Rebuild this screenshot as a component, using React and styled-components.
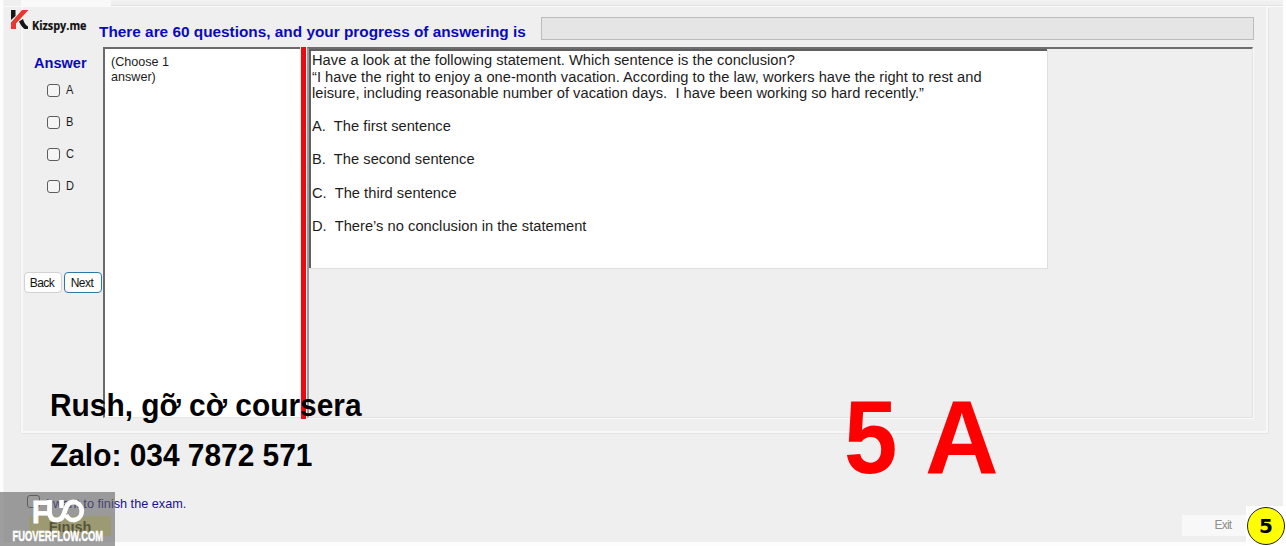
import React from "react";
import styled, { createGlobalStyle } from "styled-components";

const Global = createGlobalStyle`
  html, body { margin: 0; padding: 0; background: #fff; overflow: hidden; }
  * { box-sizing: border-box; }
  body { font-family: "Liberation Sans", Arial, sans-serif; color: #1c1c1c; }
`;

const Window = styled.div`
  position: relative;
  width: 1286px;
  height: 546px;
  padding: 0 3px 4px;
  background: #fdfdfd;
  overflow: hidden;
`;

const Surface = styled.div`
  display: flex;
  flex-direction: column;
  width: 1280px;
  height: 542px;
  background: #efefef;
  border-left: 1px solid #f5f5f5;
`;

const TabStrip = styled.div`
  display: flex;
  height: 7px;
  padding-left: 17px;
  border-bottom: 1px solid #fafafa;
`;

const Tab = styled.div`
  width: 90px;
  height: 6px;
  background: #f9f9f9;
`;

const StripRule = styled.div`
  flex: 1;
  height: 6px;
  border-bottom: 1px solid #e2e2e2;
  border-top: 1px solid #f4f4f4;
`;

const Group = styled.section`
  width: 1247px;
  height: 426px;
  margin-left: 17px;
  border: solid #f8f8f8;
  border-width: 0 2px 2px;
  box-shadow: -1px 0 #e9e9e9, 1px 1px #e5e5e5;
`;

const Header = styled.header`
  display: flex;
  height: 40px;
  padding-top: 10px;
`;

const Title = styled.h1`
  width: 442px;
  margin: 7px 0 0 76px;
  font-size: 14px;
  line-height: 17px;
  font-weight: bold;
  color: #0a0abc;
  white-space: nowrap;
  transform: scaleX(1.097);
  transform-origin: 0 0;
`;

const Progress = styled.div`
  width: 713px;
  height: 23px;
  background: #e5e5e5;
  border: 1px solid #bcbcbc;
`;

const Body = styled.div`
  display: flex;
  height: 372px;
`;

const Sidebar = styled.aside`
  width: 80px;
  display: flex;
  flex-direction: column;
`;

const SideTitle = styled.h2`
  margin: 8px 0 0 11px;
  font-size: 14px;
  line-height: 16px;
  color: #0a0abc;
  transform: scaleX(1.04);
  transform-origin: 0 0;
`;

const Options = styled.div`
  display: flex;
  flex-direction: column;
  gap: 19px;
  padding: 13px 0 0 24px;
`;

const Option = styled.label`
  display: flex;
  gap: 6px;
  height: 13px;
  font-size: 12px;
  line-height: 12px;
`;

const OptionLetter = styled.span`
  transform: scaleX(0.92);
  transform-origin: 0 0;
`;

const Box = styled.span`
  width: 13px;
  height: 13px;
  flex: none;
  border: 1px solid #5c5c5c;
  border-radius: 3px;
  background: #f5f5f5;
`;

const Nav = styled.div`
  display: flex;
  gap: 2px;
  margin: 79px 0 0 1px;
`;

const Button = styled.button`
  width: 38px;
  height: 21px;
  flex: none;
  padding: 0 2px 0 0;
  font: 12px/20px "Liberation Sans", Arial, sans-serif;
  letter-spacing: -0.5px;
  color: #111;
  background: #fdfdfd;
  border: 1px solid ${(p) => (p.$focus ? "#2a7aa8" : "#d2d2d2")};
  border-radius: 4px;
`;

const NotePane = styled.div`
  width: 197px;
  height: 371px;
  padding: 6px 6px;
  font-size: 12.6px;
  line-height: 15px;
  background: #fff;
  border: solid #6a6a6a;
  border-width: 2px 0 0 2px;
  border-bottom: 1px solid #e6e6e6;
  white-space: pre-line;
`;

const Splitter = styled.div`
  width: 5px;
  height: 372px;
  margin: 0 1px;
  background: #ea0a12;
`;

const Content = styled.div`
  width: 946px;
  height: 371px;
  border: 1px solid #e2e2e2;
  border-top: 2px solid #6e6e6e;
  border-left: 2px solid #9a9a9a;
  box-shadow: 1px 1px #fafafa;
`;

const Question = styled.div`
  width: 738px;
  height: 219px;
  padding: 1px 0 0 1px;
  font-size: 14.667px;
  line-height: 16.57px;
  letter-spacing: 0.03px;
  white-space: pre;
  background: #fff;
  border: solid #5f5f5f;
  border-width: 2px 0 0 2px;
  box-shadow: 1px 1px #dedede;
`;

const Footer = styled.footer`
  display: flex;
  justify-content: space-between;
  padding-top: 62px;
`;

const FinishArea = styled.div`
  padding-left: 23px;
`;

const FinishCheck = styled.label`
  display: flex;
  gap: 6px;
  font-size: 12.7px;
  line-height: 19px;
  height: 18px;
  color: #1a1290;
  white-space: nowrap;
`;

const FinishButton = styled.button`
  display: block;
  width: 82px;
  height: 20px;
  margin: 3px 0 0 2px;
  padding: 0;
  border: 0;
  background: #f4f08e;
  color: #4a4400;
  font: bold 14.5px/22px "Liberation Sans", Arial, sans-serif;
`;

const ExitButton = styled.button`
  width: 82px;
  height: 21px;
  margin: 20px 19px 0 0;
  padding: 0;
  border: 0;
  background: #f8f8f8;
  color: #8f8f8f;
  font: 12px/21px "Liberation Sans", Arial, sans-serif;
  letter-spacing: -0.8px;
`;

const BrandMark = styled.div`
  position: absolute;
  left: 9px;
  top: 8px;
`;

const Caption = styled.p`
  position: absolute;
  left: 50px;
  top: 381px;
  margin: 0;
  font-size: 30px;
  line-height: 48px;
  font-weight: bold;
  color: #000;
  white-space: pre;
  transform: scale(0.996, 1.04);
  transform-origin: 0 0;
`;

const Stamp = styled.div`
  position: absolute;
  left: 844px;
  top: 377px;
  display: flex;
  gap: 25px;
  font-size: 100px;
  line-height: 115px;
  font-weight: bold;
  color: #f00;
`;

const StampGlyph = styled.span`
  transform: scale(${(p) => p.$stretch}, 1.04);
  transform-origin: 0 0;
`;

const Watermark = styled.div`
  position: absolute;
  left: 0;
  top: 492px;
  width: 115px;
  height: 54px;
  background: rgba(96, 96, 96, 0.6);
`;

const BadgeTile = styled.div`
  position: absolute;
  left: 1246px;
  top: 506px;
  width: 40px;
  height: 40px;
  padding: 1px;
  background: #fff;
`;

const Badge = styled.div`
  width: 38px;
  height: 38px;
  border: 1px solid #222;
  border-radius: 50%;
  background: #ff0;
  color: #000;
  text-align: center;
  font: bold 20px/37px "DejaVu Sans", Verdana, sans-serif;
`;

const QUESTION = `Have a look at the following statement. Which sentence is the conclusion?
“I have the right to enjoy a one-month vacation. According to the law, workers have the right to rest and
leisure, including reasonable number of vacation days.  I have been working so hard recently.”

A.  The first sentence

B.  The second sentence

C.  The third sentence

D.  There’s no conclusion in the statement`;

function KizspyLogo() {
  return (
    <svg width="80" height="26" viewBox="0 0 80 26">
      <path d="M2 2h4.500v6l-4.500 4z" fill="#151515" />
      <path d="M13 2h6.500L7 15.500v5.500H2v-6.500z" fill="#e23a30" />
      <path d="M10 13.500l4-2.500q1.500 5.500 5 7.500v2.500h-3.500q-3-2-5.500-7.500z" fill="#151515" />
      <text x="23" y="22" fontFamily="Open Sans, Noto Sans, sans-serif" fontWeight="700" fontSize="11.500" fill="#111" stroke="#111" strokeWidth="0.2" textLength="54.500" lengthAdjust="spacingAndGlyphs">Kizspy.me</text>
    </svg>
  );
}

function FuoLogo() {
  return (
    <svg width="115" height="54" viewBox="0 0 115 54">
      <text x="32" y="30.500" fontFamily="Liberation Sans, sans-serif" fontWeight="700" fontSize="32" fill="#fff" stroke="#fff" strokeWidth="0.8" textLength="17" lengthAdjust="spacingAndGlyphs">F</text>
      <path d="M49.500 8v11.500q0 8.500 7 8.500q5 0 7-5l2.500-7q2-6 7.500-6a8.300 9 0 1 1-7.500 13" fill="none" stroke="#fff" strokeWidth="4.800" />
      <path d="M61.500 8v8" stroke="#fff" strokeWidth="4.600" />
      <text x="12.500" y="48.500" fontFamily="Liberation Sans, sans-serif" fontWeight="700" fontSize="15.500" fill="#fff" stroke="#fff" strokeWidth="0.5" textLength="90.500" lengthAdjust="spacingAndGlyphs">FUOVERFLOW.COM</text>
    </svg>
  );
}

export default function App() {
  return (
    <>
      <Global />
      <Window>
        <Surface>
          <TabStrip>
            <Tab />
            <StripRule />
          </TabStrip>
          <Group>
            <Header>
              <Title>There are 60 questions, and your progress of answering is</Title>
              <Progress />
            </Header>
            <Body>
              <Sidebar>
                <SideTitle>Answer</SideTitle>
                <Options>
                  {["A", "B", "C", "D"].map((letter) => (
                    <Option key={letter}>
                      <Box />
                      <OptionLetter>{letter}</OptionLetter>
                    </Option>
                  ))}
                </Options>
                <Nav>
                  <Button>Back</Button>
                  <Button $focus>Next</Button>
                </Nav>
              </Sidebar>
              <NotePane>{"(Choose 1\nanswer)"}</NotePane>
              <Splitter />
              <Content>
                <Question>{QUESTION}</Question>
              </Content>
            </Body>
          </Group>
          <Footer>
            <FinishArea>
              <FinishCheck>
                <Box />
                I want to finish the exam.
              </FinishCheck>
              <FinishButton>Finish</FinishButton>
            </FinishArea>
            <ExitButton>Exit</ExitButton>
          </Footer>
        </Surface>
        <BrandMark>
          <KizspyLogo />
        </BrandMark>
        <Caption>{"Rush, gỡ cờ coursera\nZalo: 034 7872 571"}</Caption>
        <Stamp>
          <StampGlyph $stretch={0.96}>5</StampGlyph>
          <StampGlyph $stretch={1.02}>A</StampGlyph>
        </Stamp>
        <Watermark>
          <FuoLogo />
        </Watermark>
        <BadgeTile>
          <Badge>5</Badge>
        </BadgeTile>
      </Window>
    </>
  );
}
